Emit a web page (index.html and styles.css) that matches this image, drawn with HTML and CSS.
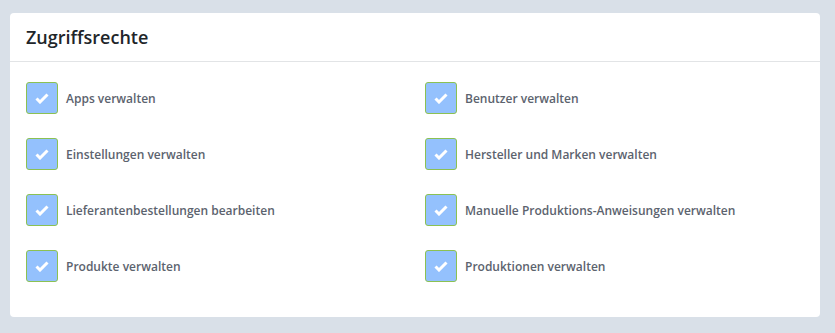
FILE: index.html
```html
<!DOCTYPE html>
<html lang="de">
<head>
    <meta charset="UTF-8">
    <title>Zugriffsrechte</title>
    <link rel="stylesheet" href="styles.css">
</head>
<body>
    <div class="card">
        <div class="card-header">
            <h2>Zugriffsrechte</h2>
        </div>
        <div class="card-body">
            <label class="perm"><span class="box"><svg viewBox="0 0 14 11"><path d="M1.5 5.5 L5 9 L12.5 1.5" /></svg></span>Apps verwalten</label>
            <label class="perm"><span class="box"><svg viewBox="0 0 14 11"><path d="M1.5 5.5 L5 9 L12.5 1.5" /></svg></span>Benutzer verwalten</label>
            <label class="perm"><span class="box"><svg viewBox="0 0 14 11"><path d="M1.5 5.5 L5 9 L12.5 1.5" /></svg></span>Einstellungen verwalten</label>
            <label class="perm"><span class="box"><svg viewBox="0 0 14 11"><path d="M1.5 5.5 L5 9 L12.5 1.5" /></svg></span>Hersteller und Marken verwalten</label>
            <label class="perm"><span class="box"><svg viewBox="0 0 14 11"><path d="M1.5 5.5 L5 9 L12.5 1.5" /></svg></span>Lieferantenbestellungen bearbeiten</label>
            <label class="perm"><span class="box"><svg viewBox="0 0 14 11"><path d="M1.5 5.5 L5 9 L12.5 1.5" /></svg></span>Manuelle Produktions-Anweisungen verwalten</label>
            <label class="perm"><span class="box"><svg viewBox="0 0 14 11"><path d="M1.5 5.5 L5 9 L12.5 1.5" /></svg></span>Produkte verwalten</label>
            <label class="perm"><span class="box"><svg viewBox="0 0 14 11"><path d="M1.5 5.5 L5 9 L12.5 1.5" /></svg></span>Produktionen verwalten</label>
        </div>
    </div>
</body>
</html>
```

FILE: styles.css
```css
*, *:before, *:after {
    box-sizing: border-box;
}

body {
    margin: 0;
    padding: 13px 15px 15px 10px;
    background: #d9e0e8;
    font-family: 'Open Sans', sans-serif;
}

.card {
    background: #fff;
    border-radius: 4px;
}

.card-header {
    height: 49px;
    padding: 0 16px;
    border-bottom: 1px solid #e2e4e6;
    display: flex;
    align-items: center;
}

.card-header h2 {
    margin: 0;
    font-size: 18px;
    font-weight: 600;
    color: #212529;
}

.card-body {
    display: grid;
    grid-template-columns: 1fr 1fr;
    column-gap: 20px;
    row-gap: 24px;
    padding: 20px 16px 35px;
}

.perm {
    display: flex;
    align-items: center;
    gap: 8px;
    font-size: 12px;
    font-weight: 600;
    color: #5c636e;
}

.box {
    width: 32px;
    height: 32px;
    flex: none;
    display: flex;
    align-items: center;
    justify-content: center;
    background: #94c1fd;
    border: 1px solid #8cc152;
    border-radius: 3px;
}

.box svg {
    width: 14px;
    height: 11px;
    fill: none;
    stroke: #fff;
    stroke-width: 3;
}
```
